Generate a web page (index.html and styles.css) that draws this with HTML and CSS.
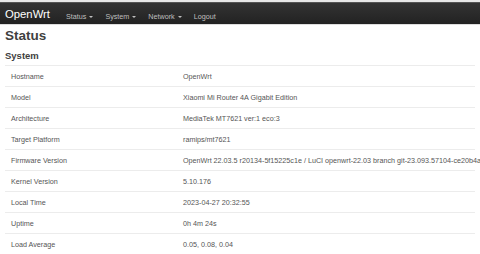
FILE: index.html
```html
<!DOCTYPE html>
<html lang="en">
<head>
	<meta charset="UTF-8">
	<title>OpenWrt - Status</title>
	<link rel="stylesheet" href="styles.css">
</head>
<body>
	<div class="topbar">
		<a class="brand" href="#">OpenWrt</a>
		<ul class="nav">
			<li><a href="#">Status <span class="caret"></span></a></li>
			<li><a href="#">System <span class="caret"></span></a></li>
			<li><a href="#">Network <span class="caret"></span></a></li>
			<li><a href="#">Logout</a></li>
		</ul>
	</div>
	<div class="main">
		<h2 class="page-title">Status</h2>
		<h3 class="section-title">System</h3>
		<table class="info">
			<tr><td class="key">Hostname</td><td>OpenWrt</td></tr>
			<tr><td class="key">Model</td><td>Xiaomi Mi Router 4A Gigabit Edition</td></tr>
			<tr><td class="key">Architecture</td><td>MediaTek MT7621 ver:1 eco:3</td></tr>
			<tr><td class="key">Target Platform</td><td>ramips/mt7621</td></tr>
			<tr><td class="key">Firmware Version</td><td>OpenWrt 22.03.5 r20134-5f15225c1e / LuCI openwrt-22.03 branch git-23.093.57104-ce20b4a</td></tr>
			<tr><td class="key">Kernel Version</td><td>5.10.176</td></tr>
			<tr><td class="key">Local Time</td><td>2023-04-27 20:32:55</td></tr>
			<tr><td class="key">Uptime</td><td>0h 4m 24s</td></tr>
			<tr><td class="key">Load Average</td><td>0.05, 0.08, 0.04</td></tr>
		</table>
	</div>
</body>
</html>
```

FILE: styles.css
```css
body{
	margin: 0;
	padding: 0;
	background-color: #fff;
	font-family: "Liberation Sans", Arial, sans-serif;
	color: #555;
	overflow: hidden;
	border-top: 2px solid #e8e8e8;
}

.topbar{
	height: 23px;
	display: flex;
	align-items: center;
	padding-left: 5px;
	background: linear-gradient(#333, #222);
	border-top: 1px solid #555;
	border-bottom: 1px solid #ddd;
	box-sizing: border-box;
}

.brand{
	color: #fff;
	font-size: 11.3px;
	text-decoration: none;
	margin-right: 16px;
}

.nav{
	list-style: none;
	margin: 0;
	padding: 0;
	display: flex;
	gap: 12px;
}

.nav a{
	color: #bfbfbf;
	font-size: 7.2px;
	text-decoration: none;
}

.caret{
	display: inline-block;
	width: 0;
	height: 0;
	margin-left: 1px;
	vertical-align: middle;
	border-top: 2px solid #bfbfbf;
	border-left: 2px solid transparent;
	border-right: 2px solid transparent;
}

.main{
	padding: 0 5px;
}

.page-title{
	margin: 2px 0 0;
	font-size: 13.5px;
	line-height: 18px;
	color: #404040;
}

.section-title{
	margin: 4px 0 0;
	font-size: 9.5px;
	line-height: 14px;
	padding-bottom: 2px;
	color: #404040;
}

.info{
	width: 100%;
	table-layout: fixed;
	border-collapse: collapse;
	font-size: 7.2px;
}

.info td{
	border-top: 1px solid #ececec;
	height: 20px;
	padding: 0 6px;
	white-space: nowrap;
	overflow: visible;
}

.info td.key{
	width: 160px;
}
```
